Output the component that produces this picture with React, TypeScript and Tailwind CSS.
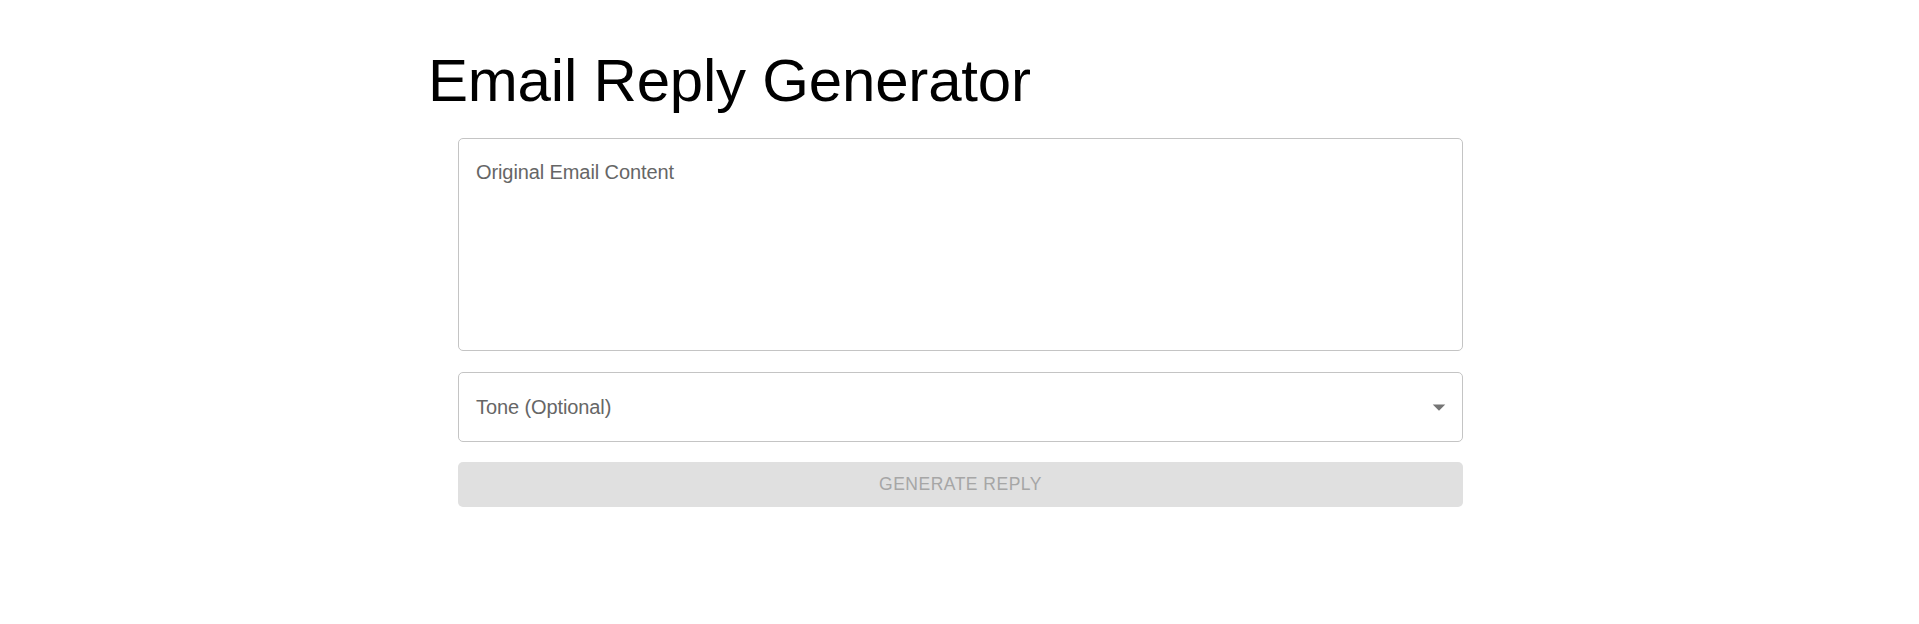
const ArrowDropDown = () => (
  <svg viewBox="0 0 24 24" className="w-[30px] h-[30px] fill-[#757575]">
    <path d="M7 10l5 5 5-5z" />
  </svg>
)

const EmailReplyGenerator = () => {
  return (
    <div className="w-[1123px] mx-auto px-[30px] pt-[46px]">
      <h1 className="text-[60px] leading-[70px] mb-[22px] tracking-[-0.2px] text-black">Email Reply Generator</h1>

      <div className="ml-[30px] mr-[28px] flex flex-col">
        <div className="h-[213px] border border-[#c4c4c4] rounded-[5px] pt-[19px] pl-[17px]">
          <div className="text-[20px] leading-[29px] tracking-[-0.1px] text-[#666666]">Original Email Content</div>
        </div>

        <div className="mt-[21px] h-[70px] border border-[#c4c4c4] rounded-[5px] pl-[17px] pr-[8px] flex items-center justify-between">
          <div className="text-[20px] leading-[29px] tracking-[-0.1px] text-[#666666]">Tone (Optional)</div>
          <ArrowDropDown />
        </div>

        <button
          disabled
          className="mt-[20px] h-[45px] w-full bg-[#e0e0e0] rounded-[5px] text-[17.5px] tracking-[0.5px] uppercase text-[#a6a6a6]"
        >
          Generate Reply
        </button>
      </div>
    </div>
  )
}

export default function App() {
  return (
    <div className="min-h-screen bg-white" style={{ fontFamily: '"Liberation Sans", Arial, sans-serif' }}>
      <EmailReplyGenerator />
    </div>
  )
}
